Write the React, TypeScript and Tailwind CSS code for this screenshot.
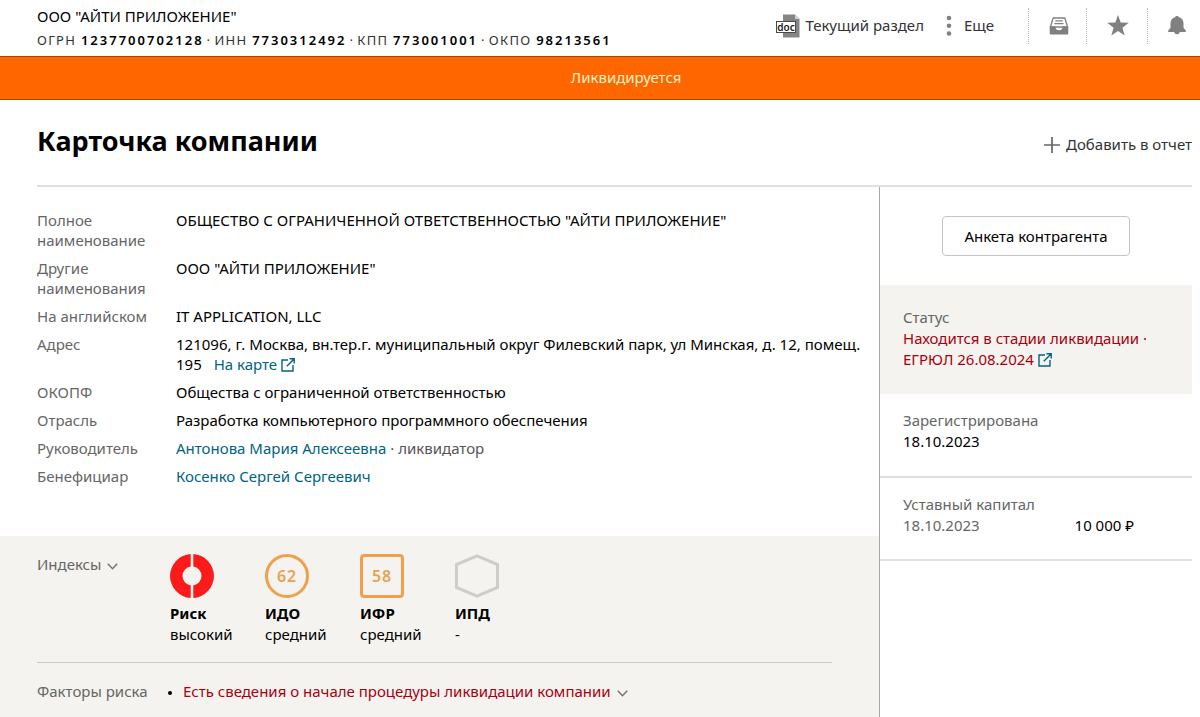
import type { ReactNode } from "react";

function DocIcon() {
  return (
    <svg width="24" height="24" viewBox="0 0 24 24" aria-hidden="true">
      <path d="M7 0.500h12l4.500 4.500v18.500H7z" fill="#858585" />
      <path d="M19 0.500v4.500h4.500z" fill="#d4d4d4" />
      <rect x="0.500" y="7.500" width="19" height="11" fill="#fff" stroke="#4a4a4a" />
      <text x="10" y="16.500" textAnchor="middle" fontSize="10" fontWeight="600" fill="#222" fontFamily="Noto Sans, sans-serif">
        doc
      </text>
    </svg>
  );
}

function DotsIcon() {
  return (
    <svg width="6" height="22" viewBox="0 0 6 22" fill="#808080" aria-hidden="true">
      <circle cx="3" cy="3" r="2.300" />
      <circle cx="3" cy="10.800" r="2.300" />
      <circle cx="3" cy="18.500" r="2.300" />
    </svg>
  );
}

function InboxIcon() {
  return (
    <svg width="20" height="18" viewBox="0 0 20 18" aria-hidden="true">
      <path d="M4.200 1h11.600l2.800 9H1.400z" fill="#fff" stroke="#808080" strokeWidth="1.300" strokeLinejoin="round" />
      <path d="M6.300 3.900h7.400M5.500 6.700h9" stroke="#808080" strokeWidth="1.200" />
      <path d="M0.700 9.500h5.600a3.700 3.700 0 0 0 7.400 0h5.600v6.800a1.200 1.200 0 0 1-1.200 1.200H1.900a1.200 1.200 0 0 1-1.200-1.200z" fill="#808080" />
    </svg>
  );
}

function StarIcon() {
  return (
    <svg width="22" height="21" viewBox="0 0 22 21" fill="#808080" aria-hidden="true">
      <path d="M11 0l2.700 7.600 8.100 0.200-6.400 4.900 2.300 7.800L11 15.900l-6.700 4.600 2.300-7.800L0.200 7.800l8.100-0.200z" />
    </svg>
  );
}

function BellIcon() {
  return (
    <svg width="18" height="19" viewBox="0 0 18 19" fill="#808080" aria-hidden="true">
      <path d="M9 0a2 2 0 0 1 1.900 1.300C13.900 2 15.500 4.400 15.500 7.500v4.300L17.800 14.600V16H11.900a3 3 0 0 1-5.800 0H0.200v-1.400l2.300-2.800V7.500c0-3.100 1.600-5.500 4.600-6.200A2 2 0 0 1 9 0z" />
    </svg>
  );
}

function PlusIcon() {
  return (
    <svg width="16" height="16" viewBox="0 0 16 16" aria-hidden="true">
      <path d="M8 0v16M0 8h16" stroke="#666" strokeWidth="1.700" />
    </svg>
  );
}

function ExternalIcon() {
  return (
    <svg className="inline-block align-[-2px]" width="14" height="14" viewBox="0 0 14 14" fill="none" stroke="#00647f" strokeWidth="1.400" aria-hidden="true">
      <path d="M7 2H1v11h11V7M8.500 0.800h4.700v4.700M13 1L5.800 8.200" />
    </svg>
  );
}

function ChevronIcon() {
  return (
    <svg className="mt-[3px]" width="11" height="7" viewBox="0 0 11 7" fill="none" stroke="#777" strokeWidth="1.600" aria-hidden="true">
      <path d="M0.800 0.800l4.700 4.900 4.700-4.900" />
    </svg>
  );
}

function RiskIcon() {
  return (
    <svg width="44" height="44" viewBox="0 0 44 44" fill="#fb1b1b" aria-hidden="true">
      <path d="M20.700 0.040V12.590A9.500 9.500 0 0 0 20.700 31.410V43.960A22 22 0 0 1 20.700 0.040z" />
      <path d="M23.300 0.040V12.590A9.500 9.500 0 0 1 23.300 31.410V43.960A22 22 0 0 0 23.300 0.040z" />
    </svg>
  );
}

function HexagonIcon() {
  return (
    <svg width="44" height="44" viewBox="0 0 44 44" fill="none" stroke="#cdcdcb" strokeWidth="3" aria-hidden="true">
      <path d="M22 1.800l20.500 8.700v23L22 42.200 1.500 33.500v-23z" />
    </svg>
  );
}

function Score({ value, shape }: { value: number; shape: string }) {
  return (
    <span className={`flex size-11 items-center justify-center border-3 border-[#f0a04b] text-base font-semibold tracking-wider text-[#e9a24f] ${shape}`}>
      {value}
    </span>
  );
}

function Row({ label, children }: { label: string; children: ReactNode }) {
  return (
    <div className="flex">
      <dt className="w-[139px] shrink-0 pr-6 text-[#666]">{label}</dt>
      <dd className="min-w-0 flex-1">{children}</dd>
    </div>
  );
}

function Index({ icon, name, level }: { icon: ReactNode; name: string; level: string }) {
  return (
    <li className="w-[95px]">
      {icon}
      <b className="mt-[5px] block">{name}</b>
      <span>{level}</span>
    </li>
  );
}

const codes = [
  ["ОГРН", "1237700702128"],
  ["ИНН", "7730312492"],
  ["КПП", "773001001"],
  ["ОКПО", "98213561"],
];

export default function App() {
  return (
    <div className="flex min-h-screen flex-col bg-white font-['Noto_Sans',sans-serif] text-[15px] leading-[21px] text-black">
      <header className="flex h-14 items-center justify-between pb-px pl-[37px]">
        <div>
          <div className="leading-6">ООО "АЙТИ ПРИЛОЖЕНИЕ"</div>
          <div className="flex text-[13px] leading-6 tracking-widest text-[#333]">
            {codes.map(([name, value], i) => (
              <span key={name}>
                {i > 0 && <span className="mx-[3px]">·</span>}
                {name} <b className="font-semibold tracking-[2px] text-black">{value}</b>
              </span>
            ))}
          </div>
        </div>
        <div className="flex items-center pb-1 text-[#333]">
          <button className="flex items-center gap-[5px]">
            <DocIcon />
            Текущий раздел
          </button>
          <button className="ml-[22px] flex items-center gap-3">
            <DotsIcon />
            Еще
          </button>
          <div className="ml-[34px] flex h-9 items-center">
            <button aria-label="Входящие" className="flex h-9 w-[58px] items-center justify-center border-l border-dotted border-[#bbb] pl-[2px]">
              <InboxIcon />
            </button>
            <button aria-label="Избранное" className="flex h-9 w-[61px] items-center justify-center border-l border-dotted border-[#bbb] pl-[2px]">
              <StarIcon />
            </button>
            <button aria-label="Уведомления" className="flex h-9 w-[53px] items-center border-l border-dotted border-[#bbb] pl-5">
              <BellIcon />
            </button>
          </div>
        </div>
      </header>

      <div className="flex h-11 items-center justify-center border-y border-[#a04a0a] bg-[#ff6600] pb-[2px] pl-13 text-[#fff3c4]">Ликвидируется</div>

      <div className="mr-2 ml-[37px] flex h-[87px] items-center justify-between border-b-2 border-[#e0e0e0]">
        <h1 className="pb-1 text-[27px] leading-8 font-bold">Карточка компании</h1>
        <button className="mt-1 flex items-center gap-[6px] text-[#333]">
          <PlusIcon />
          Добавить в отчет
        </button>
      </div>

      <div className="mr-2 flex flex-1">
        <main className="flex min-w-0 flex-1 flex-col">
          <dl className="flex min-h-[349px] flex-col gap-2 pt-[23px] pr-4 pl-[37px] leading-5">
            <Row label="Полное наименование">ОБЩЕСТВО С ОГРАНИЧЕННОЙ ОТВЕТСТВЕННОСТЬЮ "АЙТИ ПРИЛОЖЕНИЕ"</Row>
            <Row label="Другие наименования">ООО "АЙТИ ПРИЛОЖЕНИЕ"</Row>
            <Row label="На английском">IT APPLICATION, LLC</Row>
            <Row label="Адрес">
              121096, г. Москва, вн.тер.г. муниципальный округ Филевский парк, ул Минская, д. 12, помещ. 195{" "}
              <a href="#map" className="ml-2 inline-block text-[#00647f]">
                На карте <ExternalIcon />
              </a>
            </Row>
            <Row label="ОКОПФ">Общества с ограниченной ответственностью</Row>
            <Row label="Отрасль">Разработка компьютерного программного обеспечения</Row>
            <Row label="Руководитель">
              <a href="#head" className="text-[#00647f]">
                Антонова Мария Алексеевна
              </a>
              <span className="text-[#555]"> · ликвидатор</span>
            </Row>
            <Row label="Бенефициар">
              <a href="#owner" className="text-[#00647f]">
                Косенко Сергей Сергеевич
              </a>
            </Row>
          </dl>

          <section className="flex-1 bg-[#f4f3ef] pr-[47px] pl-[37px]">
            <div className="flex items-start border-b border-[#c8c9c4] pt-[18px] pb-[17px]">
              <button className="flex w-[133px] items-center gap-[6px] text-[#666]">
                Индексы <ChevronIcon />
              </button>
              <ul className="flex">
                <Index icon={<RiskIcon />} name="Риск" level="высокий" />
                <Index icon={<Score value={62} shape="rounded-full" />} name="ИДО" level="средний" />
                <Index icon={<Score value={58} shape="rounded" />} name="ИФР" level="средний" />
                <Index icon={<HexagonIcon />} name="ИПД" level="-" />
              </ul>
            </div>
            <div className="flex pt-[18px]">
              <h2 className="w-[133px] text-[#666]">Факторы риска</h2>
              <ul className="list-disc pl-[13px] marker:text-xs">
                <li>
                  <button className="flex items-center gap-[6px] text-[#a8000f]">
                    Есть сведения о начале процедуры ликвидации компании <ChevronIcon />
                  </button>
                </li>
              </ul>
            </div>
          </section>
        </main>

        <aside className="w-[313px] shrink-0 border-l border-[#a8a8a8]">
          <div className="flex h-[98px] items-center justify-center">
            <button className="h-10 rounded border border-[#c4c4c4] px-[21px]">Анкета контрагента</button>
          </div>
          <div className="h-[109px] bg-[#f4f3ef] pt-[22px] pr-6 pl-[23px]">
            <div className="text-[#666]">Статус</div>
            <div className="text-[#a8000f]">
              Находится в стадии ликвидации · ЕГРЮЛ 26.08.2024{" "}
              <a href="#egrul" aria-label="Выписка ЕГРЮЛ">
                <ExternalIcon />
              </a>
            </div>
          </div>
          <div className="h-[84px] border-b-2 border-[#e0e0e0] pt-4 pl-[23px]">
            <div className="text-[#666]">Зарегистрирована</div>
            <div>18.10.2023</div>
          </div>
          <div className="h-[83px] border-b-2 border-[#e0e0e0] pt-4 pr-[58px] pl-[23px]">
            <div className="text-[#666]">Уставный капитал</div>
            <div className="flex justify-between">
              <span className="text-[#666]">18.10.2023</span>
              <span>10 000 ₽</span>
            </div>
          </div>
        </aside>
      </div>
    </div>
  );
}
